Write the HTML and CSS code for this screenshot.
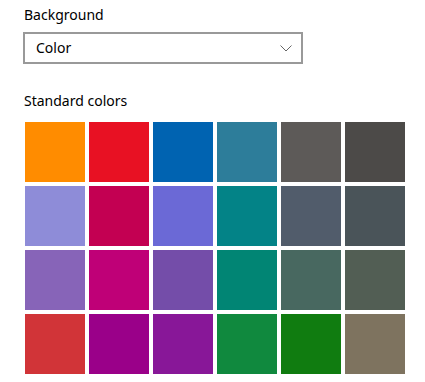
FILE: index.html
```html
<!DOCTYPE html>
<html lang="en">

<head>
    <meta charset="utf-8">
    <title>Background</title>
    <link rel="stylesheet" href="styles.css">
</head>

<body>
    <div class="panel">
        <div class="label">Background</div>
        <div class="select">
            <span class="select-text">Color</span>
            <svg class="chevron" width="12" height="7" viewBox="0 0 12 7">
                <path d="M0.5 0.5 L6 6 L11.5 0.5" fill="none" stroke="#666" stroke-width="1"/>
            </svg>
        </div>

        <div class="label label-colors">Standard colors</div>
        <!-- Farbfelder, 6 pro Reihe -->
        <div class="swatches">
            <div class="swatch c1"></div>
            <div class="swatch c2"></div>
            <div class="swatch c3"></div>
            <div class="swatch c4"></div>
            <div class="swatch c5"></div>
            <div class="swatch c6"></div>

            <div class="swatch c7"></div>
            <div class="swatch c8"></div>
            <div class="swatch c9"></div>
            <div class="swatch c10"></div>
            <div class="swatch c11"></div>
            <div class="swatch c12"></div>

            <div class="swatch c13"></div>
            <div class="swatch c14"></div>
            <div class="swatch c15"></div>
            <div class="swatch c16"></div>
            <div class="swatch c17"></div>
            <div class="swatch c18"></div>

            <div class="swatch c19"></div>
            <div class="swatch c20"></div>
            <div class="swatch c21"></div>
            <div class="swatch c22"></div>
            <div class="swatch c23"></div>
            <div class="swatch c24"></div>
        </div>
    </div>
</body>

</html>
```

FILE: styles.css
```css
body,
html {
    margin: 0px;
    background-color: #fff;
    color: #000;
    font-family: "Segoe UI", "Noto Sans", sans-serif;
    font-size: 14px;
}

.panel {
    padding: 3px 0 0 24px;
}

.label {
    height: 24px;
    line-height: 24px;
}

.select {
    box-sizing: border-box;
    margin-top: 5px;
    margin-left: -1px;
    width: 280px;
    height: 32px;
    border: 2px solid #999;
    display: flex;
    align-items: center;
    justify-content: space-between;
    padding: 0 9px 0 11px;
}

.select-text {
    line-height: 28px;
}

.chevron {
    display: block;
}

.label-colors {
    margin-top: 25px;
}

.swatches {
    margin-top: 9px;
    margin-left: 1px;
    display: grid;
    grid-template-columns: repeat(6, 60px);
    grid-auto-rows: 60px;
    gap: 4px;
}

.c1 { background-color: #ff8c00; }
.c2 { background-color: #e81123; }
.c3 { background-color: #0063b1; }
.c4 { background-color: #2d7d9a; }
.c5 { background-color: #5d5a58; }
.c6 { background-color: #4c4a48; }

.c7 { background-color: #8e8cd8; }
.c8 { background-color: #c30052; }
.c9 { background-color: #6b69d6; }
.c10 { background-color: #038387; }
.c11 { background-color: #515c6b; }
.c12 { background-color: #4a5459; }

.c13 { background-color: #8764b8; }
.c14 { background-color: #bf0077; }
.c15 { background-color: #744da9; }
.c16 { background-color: #018574; }
.c17 { background-color: #486860; }
.c18 { background-color: #525e54; }

.c19 { background-color: #d13438; }
.c20 { background-color: #9a0089; }
.c21 { background-color: #881798; }
.c22 { background-color: #10893e; }
.c23 { background-color: #107c10; }
.c24 { background-color: #7e735f; }
```
